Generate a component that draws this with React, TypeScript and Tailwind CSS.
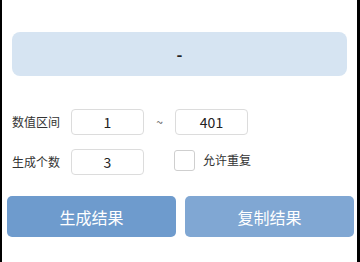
export default function App() {
  return (
    <div
      className="w-[360px] h-[262px] bg-black flex"
      style={{ fontFamily: '"Noto Sans CJK SC", "Noto Sans", sans-serif' }}
    >
      <div className="ml-[2px] w-[355px] h-full bg-white pt-[32px]">
        <div className="mx-[10px] h-[44px] rounded-lg bg-[#d6e4f2] flex items-center justify-center text-[16px] font-bold text-[#222]">
          -
        </div>

        <div className="mt-[33px] pl-[10px] flex flex-col gap-[14px] text-[12px] text-[#333]">
          <div className="flex items-center h-[26px]">
            <span className="w-[59px]">数值区间</span>
            <div className="w-[73px] h-[26px] border border-[#dcdcdc] rounded-[4px] flex items-center justify-center text-[14px] text-[#222]">
              1
            </div>
            <span className="w-[31px] text-center text-[#555]">~</span>
            <div className="w-[73px] h-[26px] border border-[#dcdcdc] rounded-[4px] flex items-center justify-center text-[14px] text-[#222]">
              401
            </div>
          </div>
          <div className="flex items-center h-[26px]">
            <span className="w-[59px]">生成个数</span>
            <div className="w-[73px] h-[26px] border border-[#dcdcdc] rounded-[4px] flex items-center justify-center text-[14px] text-[#222]">
              3
            </div>
            <div className="ml-[30px] w-[21px] h-[21px] border border-[#cfcfcf] rounded-[3px] -mt-[4px]"></div>
            <span className="ml-[8px] -mt-[4px]">允许重复</span>
          </div>
        </div>

        <div className="mt-[21px] pl-[5px] flex gap-[9px]">
          <button className="w-[169px] h-[41px] rounded-[5px] bg-[#6e9bcd] text-white text-[16px]">
            生成结果
          </button>
          <button className="w-[169px] h-[41px] rounded-[5px] bg-[#80a7d3] text-white text-[16px]">
            复制结果
          </button>
        </div>
      </div>
    </div>
  );
}
